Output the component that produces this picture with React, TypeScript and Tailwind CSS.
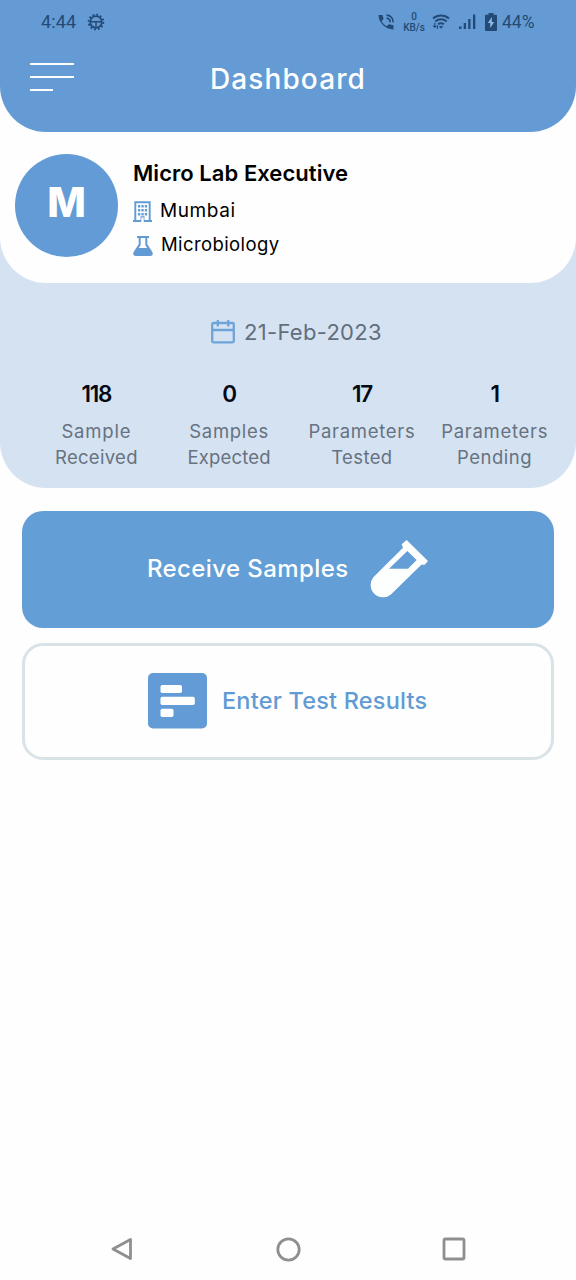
import type { ReactNode } from "react";

const stats = [
  { value: "118", label: ["Sample", "Received"], tracking: ["tracking-[0.8px]", "tracking-[0.3px]"] },
  { value: "0", label: ["Samples", "Expected"], tracking: ["tracking-[0.7px]", "tracking-[0.2px]"] },
  { value: "17", label: ["Parameters", "Tested"], tracking: ["tracking-[0.7px]", "tracking-[0.4px]"] },
  { value: "1", label: ["Parameters", "Pending"], tracking: ["tracking-[0.7px]", "tracking-[0.5px]"] },
];

const GearIcon = () => (
  <svg className="ml-[11px] size-[18px]" viewBox="0 0 18 18" fill="none" stroke="currentColor">
    <circle cx="9" cy="9" r="5.800" strokeWidth="1.800" />
    <circle cx="9" cy="9" r="7.400" strokeWidth="1.800" strokeDasharray="1.900 1.975" />
    <path d="M3 8.800h12M9 9v6" strokeWidth="1.400" />
  </svg>
);

const CallIcon = () => (
  <svg className="h-[18px] w-[17px]" viewBox="0 0 17 18" fill="none" stroke="currentColor">
    <path
      d="M.5 2h4.100l1 4-2 2c1.200 2.500 2.800 4 5.200 5.300l2-2 4.700 1v4.100C7.500 16.500.5 9.500.5 2Z"
      fill="currentColor"
      stroke="none"
    />
    <path d="M8.500 2.200a6.500 6.500 0 0 1 6.600 7M8.500 5.200a3.700 3.700 0 0 1 3.600 4" strokeWidth="1.700" />
  </svg>
);

const WifiIcon = () => (
  <svg className="h-[18px] w-[18px]" viewBox="0 0 18 18" fill="none" stroke="currentColor">
    <path d="M1 5.500a12 12 0 0 1 16 0M3.300 8.500a8.500 8.500 0 0 1 11.400 0M6 11.300a5 5 0 0 1 6 0" strokeWidth="1.900" />
    <path d="M6.800 13h4.400L9 15.800Z" fill="currentColor" stroke="none" />
    <path d="M2.800 9.800v4.500M1 12.500l1.800 2 1.800-2M5.500 16v-3.500" strokeWidth="1.100" />
  </svg>
);

const SignalIcon = () => (
  <svg className="h-[16px] w-[17px]" viewBox="0 0 17 16" fill="currentColor">
    <path d="M0 12.500h2.500V15H0zM4.700 9h2.300v6H4.700zM9.200 5h2.300v10H9.200zM14 .500h2.300V15H14z" />
  </svg>
);

const BatteryIcon = () => (
  <svg className="h-[20px] w-[12px]" viewBox="0 0 12 20">
    <path d="M3.500 1h5v1.800H11a1 1 0 0 1 1 1V18a1 1 0 0 1-1 1H1a1 1 0 0 1-1-1V3.800a1 1 0 0 1 1-1h2.500Z" fill="currentColor" />
    <path d="M6.800 5 2.800 11h2.400v5L9.200 10H6.800Z" fill="#8db8e2" />
  </svg>
);

const BuildingIcon = () => (
  <svg className="mt-[1px] h-[21px] w-[19px]" viewBox="0 0 19 21">
    <path d="M2.300 19V1.300h14.400V19" fill="none" stroke="#629bd3" strokeWidth="1.900" />
    <path
      d="M0 19h7.500v-3.700h4V19H19v2H0ZM5 4h2.300v2.500H5zM8.400 4h2.300v2.500H8.400zM11.800 4h2.300v2.500h-2.300zM5 8h2.300v2.500H5zM8.400 8h2.300v2.500H8.400zM11.800 8h2.300v2.500h-2.300zM5 12h2.300v2.500H5zM8.400 12h2.300v2.500H8.400zM11.800 12h2.300v2.500h-2.300z"
      fill="#629bd3"
    />
    <path d="M8.300 16.500h2.400V21H8.300Z" fill="#fefefe" />
  </svg>
);

const FlaskIcon = () => (
  <svg className="mt-[1px] h-[20px] w-[20px]" viewBox="0 0 20 20">
    <path
      fillRule="evenodd"
      d="M4 0h12v2h-1.700v6.200l4.900 7.600c1.300 2.200.300 4.200-2 4.200H2.800c-2.300 0-3.300-2-2-4.200l4.900-7.600V2H4ZM7.700 2v6.900L5.800 12h8.400l-1.900-3.100V2Z"
      fill="#629bd3"
    />
  </svg>
);

const CalendarIcon = () => (
  <svg className="size-6" viewBox="0 0 24 24" fill="none" stroke="#6ea4d8" strokeWidth="2.300">
    <rect x="1.200" y="3" width="21.600" height="19.300" rx="1.200" />
    <path d="M1 10h22M6.800 0v6.500M17.300 0v6.500" />
  </svg>
);

const TubeIcon = () => (
  <svg className="ml-[20px] size-[60px]" viewBox="90 117 180 180" fill="#fdffff">
    <path
      fillRule="evenodd"
      d="M203 120L267 183L257 194L247 194L155 284A37 37 0 0 1 103 232L192 143L188 133ZM205 153L150 206H207L233 180Z"
    />
  </svg>
);

const ResultsIcon = () => (
  <svg className="-mt-[1px] h-[56px] w-[59px]" viewBox="0 0 59 56">
    <rect width="59" height="55.500" rx="5" fill="#629bd5" />
    <g fill="#fff">
      <rect x="12.500" y="12" width="21.500" height="8" rx="1.800" />
      <rect x="12.500" y="23.700" width="34.300" height="8.300" rx="1.800" />
      <rect x="12.500" y="35.700" width="13" height="8.300" rx="1.800" />
    </g>
  </svg>
);

const StatusBar = () => (
  <div className="flex h-[43px] items-center pl-[41px] pr-[41px] text-[#234a76]">
    <span className="w-[35px] whitespace-nowrap font-[Roboto] text-[18px] tracking-[0.1px]">4:44</span>
    <GearIcon />
    <div className="ml-auto flex items-center">
      <CallIcon />
      <div className="ml-[8px] w-[22px] text-center font-[Roboto] text-[10px] font-medium leading-[11px]">
        <div>0</div>
        <div className="whitespace-nowrap">KB/s</div>
      </div>
      <div className="ml-[7px]">
        <WifiIcon />
      </div>
      <div className="ml-[9px]">
        <SignalIcon />
      </div>
      <div className="ml-[9px]">
        <BatteryIcon />
      </div>
      <span className="ml-[5px] mt-[2px] w-[33px] whitespace-nowrap font-[Roboto] text-[17.5px]">44%</span>
    </div>
  </div>
);

const Header = () => (
  <header className="h-[132px] rounded-b-[46px] bg-[#649bd5]">
    <StatusBar />
    <div className="flex h-[72px] pl-[30px]">
      <button aria-label="Menu" className="mt-[20px] flex h-[28px] w-[44px] flex-col justify-between">
        <span className="h-[2px] w-[44px] bg-white" />
        <span className="h-[2px] w-[44px] bg-white" />
        <span className="h-[2px] w-[23px] bg-white" />
      </button>
      <h1 className="ml-[136px] text-[28px] font-medium leading-[72px] tracking-[1.1px] text-white">Dashboard</h1>
    </div>
  </header>
);

const Profile = () => (
  <section className="flex h-[151px] pl-[15px] pt-[22px]">
    <div className="flex size-[103px] justify-center rounded-full bg-[#629bd5] text-[41px] font-extrabold leading-[96px] text-white">
      M
    </div>
    <div className="ml-[15px] text-black">
      <h2 className="mt-[3px] text-[22px] font-semibold leading-[32px] tracking-[0.05px]">Micro Lab Executive</h2>
      <div className="mt-[5px] flex h-[34px] items-center">
        <BuildingIcon />
        <span className="ml-[8px] text-[19px] tracking-[0.6px]">Mumbai</span>
      </div>
      <div className="flex h-[34px] items-center">
        <FlaskIcon />
        <span className="ml-[8px] text-[18.5px] tracking-[0.4px]">Microbiology</span>
      </div>
    </div>
  </section>
);

const Action = ({ className, children }: { className: string; children: ReactNode }) => (
  <button className={`flex w-full items-center rounded-[21px] font-medium ${className}`}>{children}</button>
);

export default function App() {
  return (
    <div className="flex h-[1280px] w-[576px] flex-col overflow-hidden bg-[#fefefe] font-[Inter,sans-serif]">
      <div className="h-[488px] rounded-b-[46px] bg-[#d5e2f2]">
        <div className="rounded-b-[46px] bg-[#fefefe]">
          <Header />
          <Profile />
        </div>
        <div className="flex h-[98px] items-center pl-[211px] text-[22px] text-[#626e7b]">
          <CalendarIcon />
          <span className="ml-[9px] whitespace-nowrap tracking-[0.3px]">21-Feb-2023</span>
        </div>
        <div className="grid grid-cols-4 pl-[30px] pr-[15px] text-center">
          {stats.map((s, i) => (
            <div key={i}>
              <div className="h-[38px] text-[22.5px] font-semibold leading-[26px] tracking-[-1.3px] text-[#050914]">
                {s.value}
              </div>
              {s.label.map((line, j) => (
                <div key={j} className={`text-[18.5px] leading-[25.5px] text-[#66727f] ${s.tracking[j]}`}>
                  {line}
                </div>
              ))}
            </div>
          ))}
        </div>
      </div>

      <main className="flex flex-1 flex-col gap-[15px] px-[22px] pt-[22.5px]">
        <Action className="h-[117.500px] bg-[#649ed6] pl-[125px] text-[24px] text-[#fdffff]">
          <span className="w-[202px] whitespace-nowrap text-left tracking-[0.4px]">Receive Samples</span>
          <TubeIcon />
        </Action>
        <Action className="h-[117px] border-[3px] border-[#d9e2e7] bg-[#fefefe] pl-[123px] text-[23.5px] text-[#629bd3]">
          <ResultsIcon />
          <span className="-mt-[2px] ml-[15px] whitespace-nowrap tracking-[0.2px]">Enter Test Results</span>
        </Action>
      </main>

      <nav className="flex h-[62px] items-center justify-between pl-[110px] pr-[110px]">
        <svg className="h-[24px] w-[24px]" viewBox="0 0 24 24" fill="none" stroke="#8f8f8f" strokeWidth="2.8" strokeLinejoin="round">
          <path d="M20.500 2.500v19L3 12Z" />
        </svg>
        <svg className="size-[25px]" viewBox="0 0 25 25" fill="none" stroke="#8f8f8f" strokeWidth="2.800">
          <circle cx="12.500" cy="12.500" r="10.700" />
        </svg>
        <svg className="size-[24px]" viewBox="0 0 24 24" fill="none" stroke="#8f8f8f" strokeWidth="2.800">
          <rect x="2" y="2" width="20" height="20" rx="1.500" />
        </svg>
      </nav>
    </div>
  );
}
